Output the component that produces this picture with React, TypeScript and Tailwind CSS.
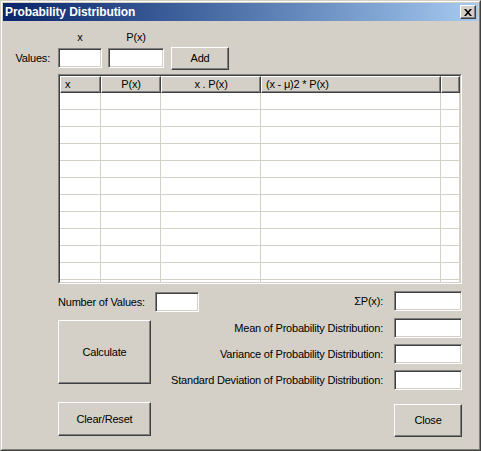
import React from "react";

const font = "font-['Liberation_Sans',Arial,sans-serif] text-[11px] tracking-[-0.2px] text-black";
const sunken = "border border-t-[#808080] border-l-[#808080] border-r-white border-b-white bg-white shadow-[inset_1px_1px_0_#404040,inset_-1px_-1px_0_#d4d0c8]";
const raised = "border border-t-white border-l-white border-r-[#404040] border-b-[#404040] bg-[#d4d0c8] shadow-[inset_-1px_-1px_0_#808080] flex items-center justify-center";

function TextBox({ w }: { w: string }) {
    return <div className={`${sunken} ${w} h-[20px] shrink-0`} />;
}

const columns = [
    { w: "w-[41px]", label: "x", align: "justify-start pl-[4px]" },
    { w: "w-[60px]", label: "P(x)", align: "justify-center" },
    { w: "w-[100px]", label: "x . P(x)", align: "justify-center" },
    { w: "w-[180px]", label: "(x - μ)2 * P(x)", align: "justify-start pl-[4px]" },
    { w: "w-[19px]", label: "", align: "justify-center" },
];

const rows = Array.from({ length: 12 }, (_, i) => i);

const results = [
    { label: "ΣP(x):", mt: "mt-0" },
    { label: "Mean of Probability Distribution:", mt: "mt-[7px]" },
    { label: "Variance of Probability Distribution:", mt: "mt-[6px]" },
    { label: "Standard Deviation of Probability Distribution:", mt: "mt-[6px]" },
];

export default function App() {
    return (
        <div className="w-[481px] h-[451px] border border-t-[#d4d0c8] border-l-[#d4d0c8] border-r-[#404040] border-b-[#404040] bg-[#d4d0c8]">
            <div className="h-full border border-t-white border-l-white border-r-[#808080] border-b-[#808080] p-[1px] flex flex-col">
                {/* title bar */}
                <div className="h-[18px] flex items-center bg-gradient-to-r from-[#0a246a] to-[#a6caf0] pl-[2px] pr-[2px]">
                    <span className="font-['Liberation_Sans',Arial,sans-serif] text-[12px] font-bold tracking-[-0.1px] text-white leading-[18px]">
                        Probability Distribution
                    </span>
                    <div className={`${raised} ml-auto w-[16px] h-[14px]`}>
                        <svg width="8" height="7" viewBox="0 0 8 7">
                            <path d="M0 0h2l2 2.3L6 0h2L5 3.5 8 7H6L4 4.7 2 7H0l3-3.5z" fill="#000" />
                        </svg>
                    </div>
                </div>

                <div className={`${font} flex flex-col`}>
                    {/* entry row */}
                    <div className="flex items-start mt-[10px]">
                        <div className="w-[55px] mt-[17px] h-[20px] leading-[20px] text-right pr-[8px]">Values:</div>
                        <div className="w-[44px] flex flex-col items-center">
                            <span className="h-[13px] leading-[13px] mb-[4px]">x</span>
                            <TextBox w="w-[44px]" />
                        </div>
                        <div className="ml-[6px] w-[56px] flex flex-col items-center">
                            <span className="h-[13px] leading-[13px] mb-[4px]">P(x)</span>
                            <TextBox w="w-[56px]" />
                        </div>
                        <button className={`${raised} ml-[7px] mt-[16px] w-[58px] h-[23px]`}>Add</button>
                    </div>

                    {/* data grid */}
                    <div className="ml-[55px] mt-[4px] w-[404px] h-[210px] border border-t-[#808080] border-l-[#808080] border-r-white border-b-white">
                        <div className="h-full border border-t-[#404040] border-l-[#404040] border-r-[#d4d0c8] border-b-[#d4d0c8] bg-white overflow-hidden">
                            <div className="flex">
                                {columns.map((c, i) => (
                                    <div
                                        key={i}
                                        className={`${c.w} ${c.align} h-[17px] flex items-center leading-[15px] bg-[#d4d0c8] border border-t-white border-l-white border-r-[#404040] border-b-[#404040] shadow-[inset_-1px_-1px_0_#808080] whitespace-nowrap`}
                                    >
                                        {c.label}
                                    </div>
                                ))}
                            </div>
                            {rows.map((r) => (
                                <div key={r} className="flex">
                                    {columns.map((c, i) => (
                                        <div key={i} className={`${c.w} h-[17px] border-r border-b border-[#d4d0c8]`} />
                                    ))}
                                </div>
                            ))}
                        </div>
                    </div>

                    {/* results */}
                    <div className="flex mt-[7px] mr-[16px]">
                        <div className="ml-[55px] mt-[1px] w-[93px] shrink-0 flex flex-col">
                            <div className="flex items-center h-[20px] whitespace-nowrap">
                                <span className="w-[97px] shrink-0">Number of Values:</span>
                                <TextBox w="w-[44px]" />
                            </div>
                            <button className={`${raised} mt-[8px] w-[93px] h-[64px]`}>Calculate</button>
                            <button className={`${raised} mt-[18px] w-[93px] h-[34px]`}>Clear/Reset</button>
                        </div>
                        <div className="ml-auto flex flex-col items-end">
                            {results.map((r) => (
                                <div key={r.label} className={`flex items-center h-[20px] ${r.mt}`}>
                                    <span className="whitespace-nowrap">{r.label}</span>
                                    <div className="ml-[11px]">
                                        <TextBox w="w-[68px]" />
                                    </div>
                                </div>
                            ))}
                            <button className={`${raised} mt-[14px] w-[68px] h-[33px]`}>Close</button>
                        </div>
                    </div>
                </div>
            </div>
        </div>
    );
}
